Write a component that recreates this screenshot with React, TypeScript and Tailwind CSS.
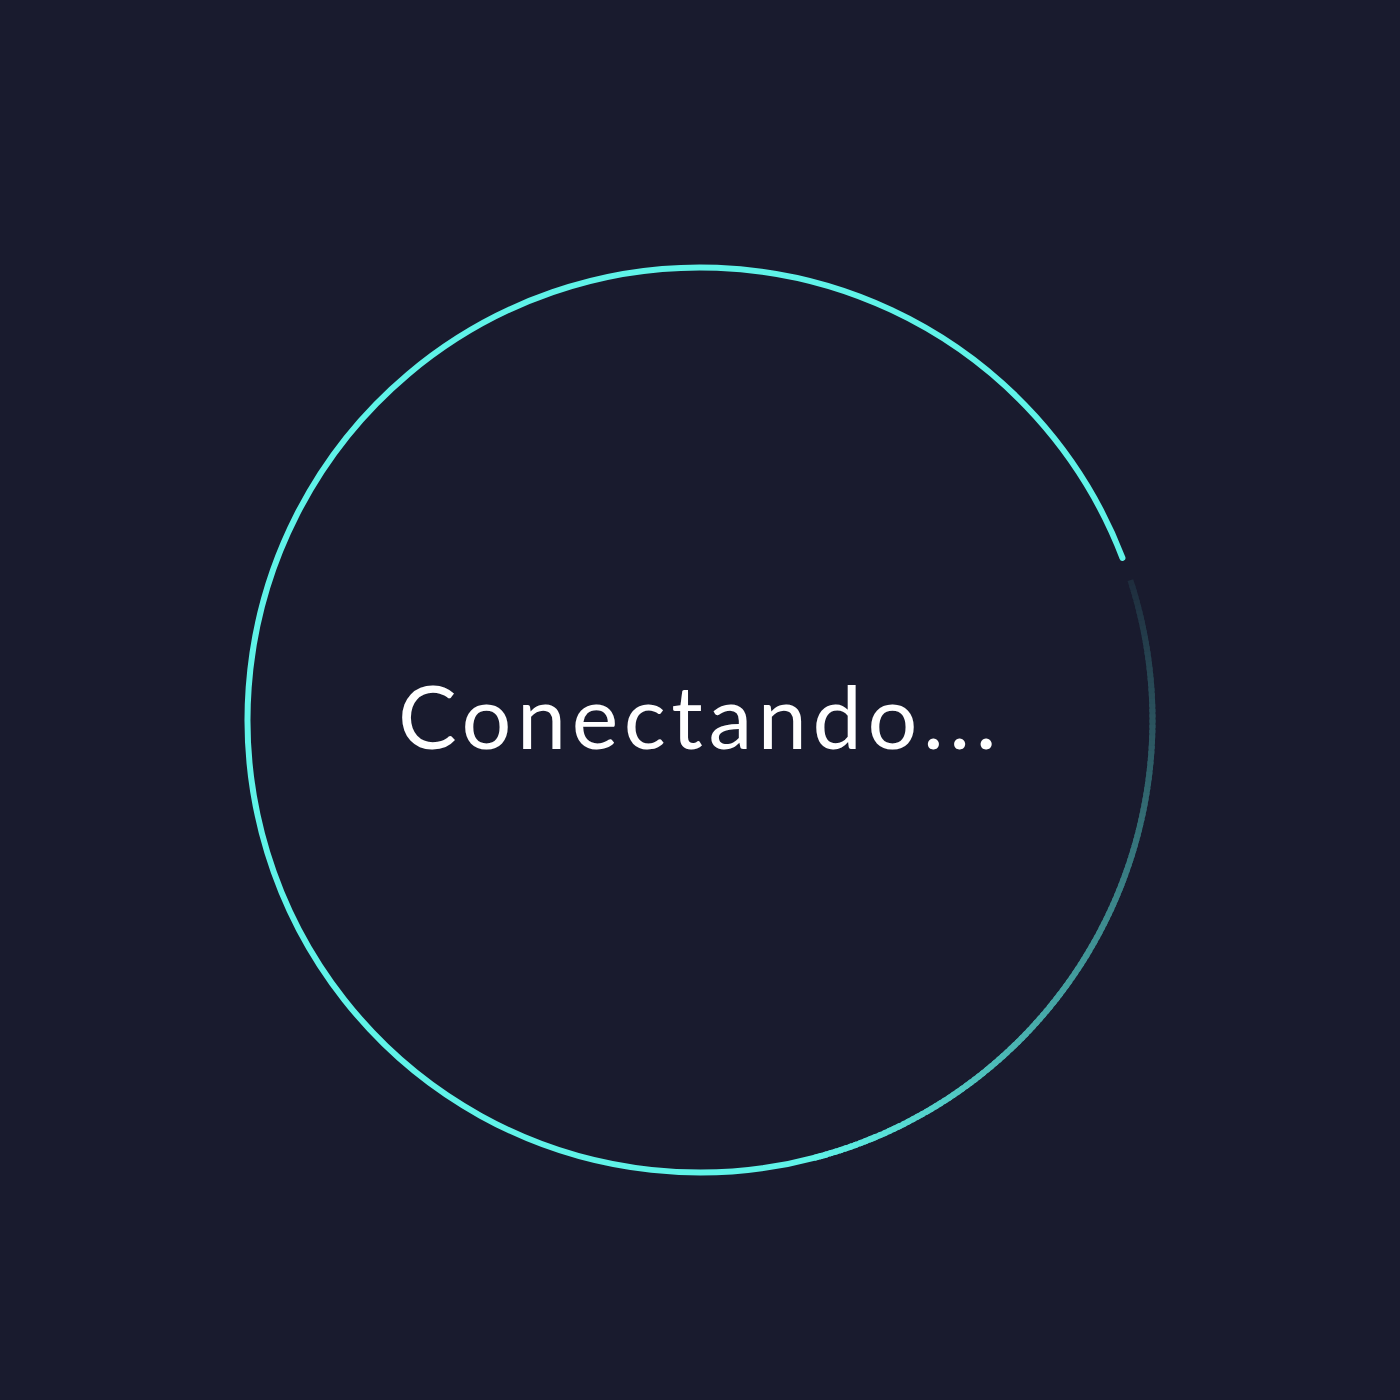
const CX = 700
const CY = 720
const R = 452.5
const CYAN = [95, 243, 232]
const BG = [25, 27, 46]

const HEAD_DEG = -21
const FADE_START = -18
const FADE_END = 75

function point(deg: number) {
  const a = (deg * Math.PI) / 180
  return [CX + R * Math.cos(a), CY + R * Math.sin(a)]
}

function arc(from: number, to: number) {
  const [x1, y1] = point(from)
  const [x2, y2] = point(to)
  const large = to - from > 180 ? 1 : 0
  return `M ${x1.toFixed(2)} ${y1.toFixed(2)} A ${R} ${R} 0 ${large} 1 ${x2.toFixed(2)} ${y2.toFixed(2)}`
}

function mix(t: number) {
  const c = CYAN.map((v, i) => Math.round(BG[i] + (v - BG[i]) * t))
  return `rgb(${c[0]}, ${c[1]}, ${c[2]})`
}

// tail of the spinner: solid colours blended toward the background so overlaps don't seam
const STEPS = 140
const fadeSegments = Array.from({ length: STEPS }, (_, i) => {
  const step = (FADE_END - FADE_START) / STEPS
  const from = FADE_START + i * step
  const t = (i + 0.5) / STEPS
  return { d: arc(from, from + step + 0.4), color: mix(0.08 + 0.92 * t) }
})

function Spinner() {
  return (
    <svg width="1400" height="1400" viewBox="0 0 1400 1400" className="absolute inset-0">
      {fadeSegments.map((s, i) => (
        <path key={i} d={s.d} fill="none" stroke={s.color} strokeWidth={6} />
      ))}
      <path d={arc(FADE_END, 360 + HEAD_DEG)} fill="none" stroke={mix(1)} strokeWidth={6} strokeLinecap="round" />
    </svg>
  )
}

export default function App() {
  return (
    <div className="relative flex h-[1400px] w-[1400px] items-center justify-center overflow-hidden bg-[#191b2e]">
      <Spinner />
      <p className="relative mt-[30px] text-[88px] leading-none tracking-[5.6px] text-white [font-family:Lato,'Noto_Sans',sans-serif] font-normal">
        Conectando...
      </p>
    </div>
  )
}
